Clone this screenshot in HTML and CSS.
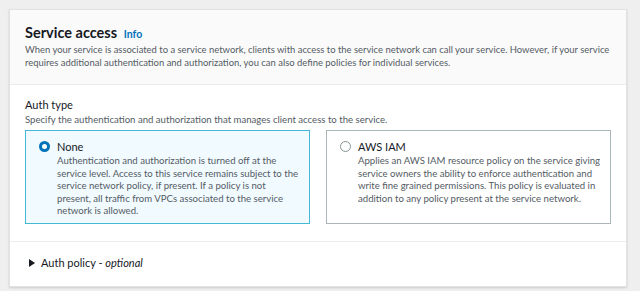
FILE: index.html
```html
<!DOCTYPE html>
<html lang="en">
<head>
  <meta charset="UTF-8" />
  <title>Service access</title>
  <link rel="stylesheet" href="styles.css">
</head>
<body>

  <div class="card">
    <div class="card-header">
      <h2>Service access <a class="info" href="#">Info</a></h2>
      <p class="desc">When your service is associated to a service network, clients with access to the service network can call your service. However, if your service requires additional authentication and authorization, you can also define policies for individual services.</p>
    </div>

    <div class="card-body">
      <div class="label">Auth type</div>
      <div class="hint">Specify the authentication and authorization that manages client access to the service.</div>

      <div class="tiles">
        <div class="tile selected">
          <span class="radio on"></span>
          <div class="tile-text">
            <div class="tile-title">None</div>
            <div class="tile-desc">Authentication and authorization is turned off at the service level. Access to this service remains subject to the service network policy, if present. If a policy is not present, all traffic from VPCs associated to the service network is allowed.</div>
          </div>
        </div>
        <div class="tile">
          <span class="radio"></span>
          <div class="tile-text">
            <div class="tile-title">AWS IAM</div>
            <div class="tile-desc">Applies an AWS IAM resource policy on the service giving service owners the ability to enforce authentication and write fine grained permissions. This policy is evaluated in addition to any policy present at the service network.</div>
          </div>
        </div>
      </div>
    </div>

    <div class="expander">
      <span class="caret"></span>
      <span>Auth policy - <i>optional</i></span>
    </div>
  </div>

</body>
</html>
```

FILE: styles.css
```css
body, html {
  margin: 0; padding: 0;
  background: #efefef;
  font-family: 'Lato', sans-serif;
  color: #16191f;
}

body {
  padding: 9px 13px 5px 9px;
}

.card {
  background: white;
  border: 1px solid #e2e2e2;
  box-shadow: 0 1px 2px rgba(0, 0, 0, 0.15);
}

.card-header {
  background: #fafafa;
  border-bottom: 1px solid #eaeded;
  padding: 14px 15px 0 15px;
  height: 60px;
}

h2 {
  margin: 0;
  font-size: 14.5px;
  font-weight: 700;
  line-height: 18px;
}

.info {
  color: #0073bb;
  font-size: 10.5px;
  font-weight: 700;
  text-decoration: none;
  margin-left: 3px;
}

.desc {
  margin: 1px 0 0 0;
  font-size: 9.45px;
  line-height: 12.5px;
  color: #545b64;
}

.card-body {
  padding: 12px 15px 17px 15px;
  border-bottom: 1px solid #eaeded;
}

.label {
  font-size: 11px;
  line-height: 15px;
}

.hint {
  font-size: 9.6px;
  line-height: 13px;
  color: #545b64;
  margin-top: 1px;
}

.tiles {
  display: flex;
  gap: 16px;
  margin-top: 4px;
}

.tile {
  flex: 1;
  display: flex;
  gap: 7px;
  border: 1px solid #aab7b8;
  padding: 8px 8px 0 13px;
  height: 84px;
}

.tile.selected {
  background: #f1faff;
  border-color: #44b9d6;
}

.radio {
  flex: none;
  width: 11px;
  height: 11px;
  border: 1px solid #879596;
  border-radius: 50%;
  margin-top: 2px;
  box-sizing: border-box;
}

.radio.on {
  border: 3px solid #0073bb;
  background: white;
}

.tile-title {
  font-size: 11px;
  line-height: 15px;
}

.tile-desc {
  font-size: 9.6px;
  line-height: 12.6px;
  color: #545b64;
  margin-top: 1px;
}

.expander {
  display: flex;
  align-items: center;
  gap: 6px;
  padding: 13px 15px 15px 19px;
  font-size: 11px;
  line-height: 16px;
}

.caret {
  width: 0; height: 0;
  border-left: 6px solid #16191f;
  border-top: 4px solid transparent;
  border-bottom: 4px solid transparent;
}
```
